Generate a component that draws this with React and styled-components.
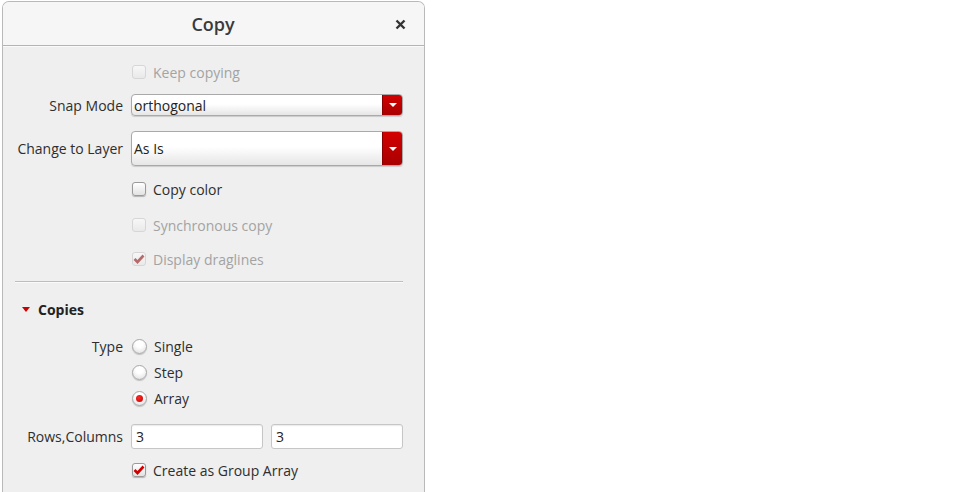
import styled, { createGlobalStyle } from "styled-components";

const GlobalStyle = createGlobalStyle`
  html, body {
    margin: 0;
    padding: 0;
    background: #ffffff;
    font-family: "Open Sans", "Noto Sans", sans-serif;
    overflow: hidden;
  }
`;

const Page = styled.div`
  width: 963px;
  height: 492px;
  padding: 1px 0 0 2px;
  box-sizing: border-box;
`;

const Dialog = styled.div`
  width: 423px;
  height: 500px;
  box-sizing: border-box;
  border: 1px solid #b9b9b9;
  border-bottom: none;
  border-radius: 7px 7px 0 0;
  background: #efefef;
  overflow: hidden;
`;

const TitleBar = styled.div`
  height: 43px;
  display: flex;
  align-items: center;
  justify-content: center;
  position: relative;
  background: #f6f6f6;
  border-bottom: 1px solid #b4b4b4;
  box-shadow: 0 1px 0 #fafafa;
`;

const Title = styled.div`
  font-size: 18px;
  font-weight: 600;
  color: #3a3a3a;
  margin-left: -1px;
`;

const Close = styled.button`
  position: absolute;
  right: 16px;
  top: 14px;
  width: 16px;
  height: 16px;
  padding: 0;
  border: none;
  background: none;
  display: flex;
  align-items: center;
  justify-content: center;
`;

const Body = styled.div`
  padding: 14px 21px 0 0;
`;

const Row = styled.div`
  display: grid;
  grid-template-columns: 120px 1fr;
  column-gap: 8px;
  align-items: center;
  min-height: ${({ $h }) => $h || 24}px;
  margin-top: ${({ $top }) => $top || 0}px;
`;

const Label = styled.div`
  text-align: right;
  font-size: 14px;
  color: #2e2e2e;
`;

const Check = styled.label`
  display: flex;
  align-items: center;
  gap: 7px;
  font-size: 14px;
  color: ${({ $disabled }) => ($disabled ? "#a3a3a3" : "#2e2e2e")};
  padding-left: 1px;
`;

const Box = styled.span`
  width: 14px;
  height: 14px;
  box-sizing: border-box;
  border-radius: 3px;
  border: 1px solid ${({ $disabled }) => ($disabled ? "#d6d6d6" : "#9a9a9a")};
  background: ${({ $disabled }) =>
    $disabled
      ? "linear-gradient(#f7f7f7, #e9e9e9)"
      : "linear-gradient(#ffffff, #e2e2e2)"};
  box-shadow: ${({ $disabled }) =>
    $disabled ? "none" : "0 1px 1px rgba(0,0,0,0.25)"};
  display: flex;
  align-items: center;
  justify-content: center;
`;

const Radio = styled.span`
  width: 15px;
  height: 15px;
  box-sizing: border-box;
  border-radius: 50%;
  border: 1px solid #a8a8a8;
  background: radial-gradient(circle at 50% 30%, #ffffff 30%, #dcdcdc 100%);
  box-shadow: 0 1px 1px rgba(0, 0, 0, 0.2);
  display: flex;
  align-items: center;
  justify-content: center;
  &::after {
    content: "";
    display: ${({ $on }) => ($on ? "block" : "none")};
    width: 7px;
    height: 7px;
    border-radius: 50%;
    background: radial-gradient(circle at 40% 35%, #ff2a2a, #c00000);
  }
`;

const Select = styled.div`
  display: flex;
  height: ${({ $h }) => $h}px;
  box-sizing: border-box;
  border: 1px solid #a9a9a9;
  border-radius: 4px;
  overflow: hidden;
  background: linear-gradient(#ffffff 0%, #ffffff 45%, #e6e6e6 100%);
  box-shadow: 0 1px 1px rgba(0, 0, 0, 0.15);
`;

const SelectText = styled.div`
  flex: 1;
  display: flex;
  align-items: center;
  padding-left: 2px;
  font-size: 14px;
  color: #222;
`;

const SelectArrow = styled.div`
  width: 19px;
  background: linear-gradient(#d40000, #a80000);
  border-left: 1px solid #8a0000;
  display: flex;
  align-items: center;
  justify-content: center;
  &::after {
    content: "";
    border-left: 4px solid transparent;
    border-right: 4px solid transparent;
    border-top: 4px solid #ffffff;
  }
`;

const Separator = styled.div`
  margin: 10px 0 0 12px;
  height: 1px;
  background: #bdbdbd;
  box-shadow: 0 1px 0 #fafafa;
`;

const Section = styled.div`
  display: flex;
  align-items: center;
  gap: 8px;
  height: 24px;
  margin-top: 15px;
  padding-left: 19px;
  font-size: 14px;
  font-weight: 700;
  color: #222;
  &::before {
    content: "";
    border-left: 4px solid transparent;
    border-right: 4px solid transparent;
    border-top: 5px solid #cc0000;
  }
`;

const Inputs = styled.div`
  display: grid;
  grid-template-columns: 1fr 1fr;
  column-gap: 8px;
`;

const Input = styled.div`
  height: 25px;
  box-sizing: border-box;
  border: 1px solid #c6c6c6;
  border-radius: 3px;
  background: #ffffff;
  box-shadow: inset 0 1px 1px rgba(0, 0, 0, 0.08);
  display: flex;
  align-items: center;
  padding-left: 4px;
  font-size: 14px;
  color: #222;
`;

const Tick = ({ disabled }) => (
  <svg width="12" height="10" viewBox="0 0 12 10">
    <path
      d="M1.5 5 L4.5 8 L10.5 1.5"
      fill="none"
      stroke={disabled ? "#b76a6a" : "#d00000"}
      strokeWidth="2.6"
      strokeLinejoin="miter"
    />
  </svg>
);

const CheckRow = ({ top, label, checked, disabled }) => (
  <Row $top={top}>
    <span />
    <Check $disabled={disabled}>
      <Box $disabled={disabled}>{checked && <Tick disabled={disabled} />}</Box>
      {label}
    </Check>
  </Row>
);

const RadioRow = ({ top, label, on, caption }) => (
  <Row $top={top}>
    <Label>{caption}</Label>
    <Check>
      <Radio $on={on} />
      {label}
    </Check>
  </Row>
);

export default function App() {
  return (
    <>
      <GlobalStyle />
      <Page>
        <Dialog>
          <TitleBar>
            <Title>Copy</Title>
            <Close aria-label="close">
              <svg width="11" height="11" viewBox="0 0 11 11">
                <path d="M1.5 1.5 L9.5 9.5 M9.5 1.5 L1.5 9.5" stroke="#333" strokeWidth="2.4" />
              </svg>
            </Close>
          </TitleBar>
          <Body>
            <CheckRow label="Keep copying" disabled />
            <Row $top={10} $h={22}>
              <Label>Snap Mode</Label>
              <Select $h={22}>
                <SelectText>orthogonal</SelectText>
                <SelectArrow />
              </Select>
            </Row>
            <Row $top={15} $h={35}>
              <Label>Change to Layer</Label>
              <Select $h={35}>
                <SelectText>As Is</SelectText>
                <SelectArrow />
              </Select>
            </Row>
            <CheckRow top={11} label="Copy color" />
            <CheckRow top={12} label="Synchronous copy" disabled />
            <CheckRow top={10} label="Display draglines" checked disabled />
            <Separator />
            <Section>Copies</Section>
            <RadioRow top={13} caption="Type" label="Single" />
            <RadioRow top={2} label="Step" />
            <RadioRow top={2} label="Array" on />
            <Row $top={14} $h={25}>
              <Label>Rows,Columns</Label>
              <Inputs>
                <Input>3</Input>
                <Input>3</Input>
              </Inputs>
            </Row>
            <CheckRow top={9} label="Create as Group Array" checked />
          </Body>
        </Dialog>
      </Page>
    </>
  );
}
